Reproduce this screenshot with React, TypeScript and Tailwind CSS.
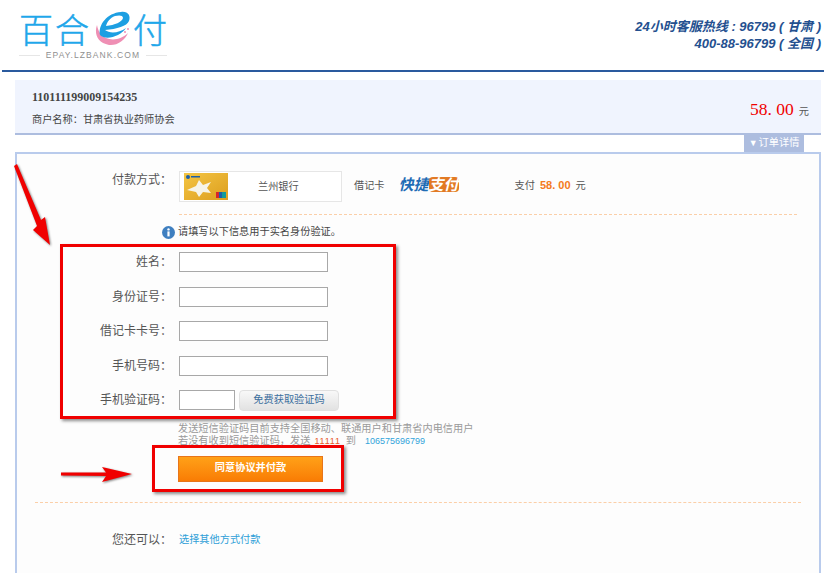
import React from 'react';

const FONT = "font-['Liberation_Sans','Noto_Sans_CJK_SC',sans-serif]";

const fields = ['姓名', '身份证号', '借记卡卡号', '手机号码'];

function EMark() {
  return (
    <svg width="36" height="36" viewBox="0 0 36 36" className="shrink-0 ml-[4px]">
      <path d="M2 14 C-1 22 2 32 14 34 C22 35 30 29 33 22 C27 28 18 30 11 27 C6 25 3 20 2 14 Z" fill="#ef8fb4" />
      <path d="M5 24 C3 14 12 2 26 1 C33 0 36 5 34 10 C32 15 22 18 10 19 C15 23 24 22 31 17 C26 25 11 30 5 24 Z M11 15 C20 14 27 11 28 7 C28 4 24 4 20 5 C15 7 12 11 11 15 Z" fill="#1d9fe2" fillRule="evenodd" />
      <circle cx="33" cy="18" r="1" fill="#ef8fb4" />
      <circle cx="30" cy="21" r="1" fill="#ef8fb4" />
    </svg>
  );
}

function Logo() {
  return (
    <div className="flex flex-col w-[148px] ml-[17px] pt-[11px]">
      <div className="flex items-center h-[36px] text-[34px] leading-none font-light text-[#1fa7ea] [-webkit-text-stroke:0.5px_#1fa7ea] font-['Noto_Sans_CJK_SC',sans-serif] whitespace-nowrap">
        <span className="tracking-[2px]">百合</span>
        <EMark />
        <span className="ml-[2px]">付</span>
      </div>
      <div className="flex items-center mt-[3px] gap-[6px]">
        <div className="h-px flex-1 bg-[#e6e6e6]" />
        <span className="text-[8.5px] leading-[10px] tracking-[1.1px] text-[#8f8f8f] font-['Liberation_Sans',sans-serif] whitespace-nowrap">EPAY.LZBANK.COM</span>
        <div className="h-px flex-1 bg-[#e6e6e6]" />
      </div>
    </div>
  );
}

function BankCard() {
  return (
    <div className="relative w-[44px] h-[27px] bg-gradient-to-br from-[#f4c542] to-[#dc9e1c] overflow-hidden">
      <svg width="44" height="27" viewBox="0 0 44 27" className="absolute inset-0">
        <path d="M3 17 L12 13 L15 7 L19 12 L27 9 L23 15 L27 20 L19 19 L15 24 L12 19 Z" fill="#f6f4e8" />
        <circle cx="4" cy="4" r="2" fill="#1c5fa8" />
        <rect x="7" y="3" width="9" height="1.5" fill="#1c5fa8" />
        <rect x="32" y="19" width="4" height="6" fill="#d8262c" />
        <rect x="35" y="19" width="3" height="6" fill="#1c5fa8" />
        <rect x="38" y="19" width="4" height="6" fill="#119a9a" />
      </svg>
    </div>
  );
}

function InfoIcon() {
  return (
    <svg width="13" height="13" viewBox="0 0 13 13" className="shrink-0">
      <circle cx="6.5" cy="6.5" r="6.5" fill="#3f7fc0" />
      <circle cx="6.5" cy="3.4" r="1.2" fill="#fff" />
      <rect x="5.4" y="5.4" width="2.2" height="5" fill="#fff" />
    </svg>
  );
}

function DiagonalArrow() {
  return (
    <svg width="42" height="84" viewBox="0 0 42 84" className="absolute left-[12px] top-[163px] drop-shadow-[1px_1px_1px_rgba(0,0,0,0.5)]">
      <path d="M2 3 L5 1 L29 57 L33 54 L38 82 L21 67 L25 63 Z" fill="#f00000" />
    </svg>
  );
}

function RightArrow() {
  return (
    <svg width="74" height="18" viewBox="0 0 74 18" className="absolute left-[60px] top-[465px] drop-shadow-[1px_1px_1px_rgba(0,0,0,0.5)]">
      <path d="M1 7.5 L46 7.5 L42 2 L72 9 L42 17 L46 11 L1 10.5 Z" fill="#f00000" />
    </svg>
  );
}

export default function App() {
  return (
    <div className={`relative w-[824px] h-[573px] overflow-hidden bg-white text-[#555] text-[12px] ${FONT}`}>
      {/* header */}
      <div className="flex justify-between h-[72px] ml-[2px] border-b-2 border-[#2a5a9e]">
        <Logo />
        <div className="pt-[18px] pr-[3px] text-right text-[13px] leading-[17px] italic font-bold text-[#24508f] whitespace-nowrap">
          <div>24小时客服热线 : 96799 ( 甘肃 )</div>
          <div>400-88-96799 ( 全国 )</div>
        </div>
      </div>

      {/* order summary */}
      <div className="flex justify-between items-center h-[55px] mt-[8px] ml-[15px] mr-[3px] bg-[#f0f4fe] border-b-2 border-[#adbddf]">
        <div className="pl-[17px] pt-[4px]">
          <div className="font-['Liberation_Serif','Noto_Sans_CJK_SC',serif] font-bold text-[12px] leading-[14px] text-[#444]">110111199009154235</div>
          <div className="mt-[9px] text-[10.2px] leading-[14px] text-[#444]">商户名称：甘肃省执业药师协会</div>
        </div>
        <div className="pr-[12px] pt-[6px] flex items-baseline gap-[5px]">
          <span className="font-['Liberation_Serif',serif] text-[17.5px] text-[#f00000] whitespace-pre">58. 00</span>
          <span className="text-[10.2px] text-[#555]">元</span>
        </div>
      </div>

      {/* order details tab */}
      <div className="flex justify-end mr-[20px] h-[17px]">
        <div className="flex items-center justify-center w-[60px] bg-[#adbddf] text-white text-[10.2px] leading-none">
          <span className="text-[9px] mr-px">▼</span>订单详情
        </div>
      </div>

      {/* main panel */}
      <div className="ml-[15px] mr-[3px] h-[421px] border-2 border-b-0 border-[#b9cbec] bg-[#fdfdfd]">
        {/* payment method */}
        <div className="ml-[17px] pt-[17px] h-[48px] flex">
          <div className="w-[138px] text-right pt-[1px] text-[12px] leading-[17px]">付款方式：</div>
          <div className="flex items-center ml-[7px] w-[163px] h-[31px] pl-[4px] border border-[#e6e6e6] bg-white">
            <BankCard />
            <span className="ml-[30px] text-[10.2px]">兰州银行</span>
          </div>
          <span className="ml-[12px] mt-[6px] text-[10.2px] leading-[17px]">借记卡</span>
          <div className="ml-[14px] mt-[5px] h-[16px] flex items-center text-[15px] italic font-bold leading-none whitespace-nowrap">
            <span className="text-[#1f6cb5]">快捷</span>
            <span className="bg-[#e27a24] text-white rounded-sm">支付</span>
          </div>
          <div className="ml-[56px] mt-[6px] flex items-baseline gap-[5px] text-[10.2px] leading-[17px]">
            <span>支付</span>
            <span className="text-[11px] font-bold text-[#f47a20] whitespace-pre">58. 00</span>
            <span>元</span>
          </div>
        </div>

        <div className="ml-[162px] mr-[22px] mt-[12px] border-t border-dashed border-[#fbcfa8]" />

        <div className="flex items-center gap-[3px] ml-[145px] mt-[9px] h-[16px] text-[10.2px] leading-none text-[#444]">
          <InfoIcon />
          请填写以下信息用于实名身份验证。
        </div>

        {/* real-name form, boxed in red */}
        <div className="flex flex-col gap-[14.6px] ml-[43px] mt-[4px] w-[336px] h-[175px] pt-[5px] border-[3px] border-[#f00000] shadow-[2px_2px_3px_rgba(0,0,0,0.45)]">
          {fields.map((label) => (
            <div key={label} className="flex items-center h-[20px]">
              <div className="w-[109px] text-right text-[12px]">{label}：</div>
              <input className="ml-[7px] w-[149px] h-[20px] border border-[#a8a8a8] bg-white" />
            </div>
          ))}
          <div className="flex items-center h-[20px]">
            <div className="w-[109px] text-right text-[12px]">手机验证码：</div>
            <input className="ml-[7px] w-[56px] h-[20px] border border-[#a8a8a8] bg-white" />
            <button className="ml-[4px] w-[100px] h-[21px] rounded-sm border border-[#e0e0e0] bg-gradient-to-b from-[#f8f8f8] to-[#e2e2e2] text-[10.2px] leading-none text-[#3d6f9e]">
              免费获取验证码
            </button>
          </div>
        </div>

        <div className="ml-[161px] mt-[4px] text-[10.2px] leading-[11.5px] text-[#9a9a9a] whitespace-nowrap">
          <div>发送短信验证码目前支持全国移动、联通用户和甘肃省内电信用户</div>
          <div>
            若没有收到短信验证码，发送<span className="ml-[4px] text-[9px] tracking-[0.8px] text-[#e8582a]">11111</span>
            <span className="ml-[5px]">到</span>
            <span className="ml-[9px] text-[9px] text-[#32a4da]">106575696799</span>
          </div>
        </div>

        {/* submit, boxed in red */}
        <div className="ml-[135px] mt-[-2px] w-[192px] h-[47px] pl-[23px] flex items-center border-[3px] border-[#f00000] shadow-[2px_2px_3px_rgba(0,0,0,0.45)]">
          <button className="w-[145px] h-[26px] border border-[#e8751a] bg-gradient-to-b from-[#ffa117] to-[#f97c04] text-white text-[10.2px] font-bold leading-none">
            同意协议并付款
          </button>
        </div>

        <div className="ml-[18px] mr-[18px] mt-[10px] border-t border-dashed border-[#fbcfa8]" />

        <div className="flex items-center mt-[28px] ml-[17px] h-[17px] text-[12px]">
          <div className="w-[138px] text-right">您还可以：</div>
          <span className="ml-[7px] text-[10.2px] text-[#2f9fd8]">选择其他方式付款</span>
        </div>
      </div>

      <DiagonalArrow />
      <RightArrow />
    </div>
  );
}
